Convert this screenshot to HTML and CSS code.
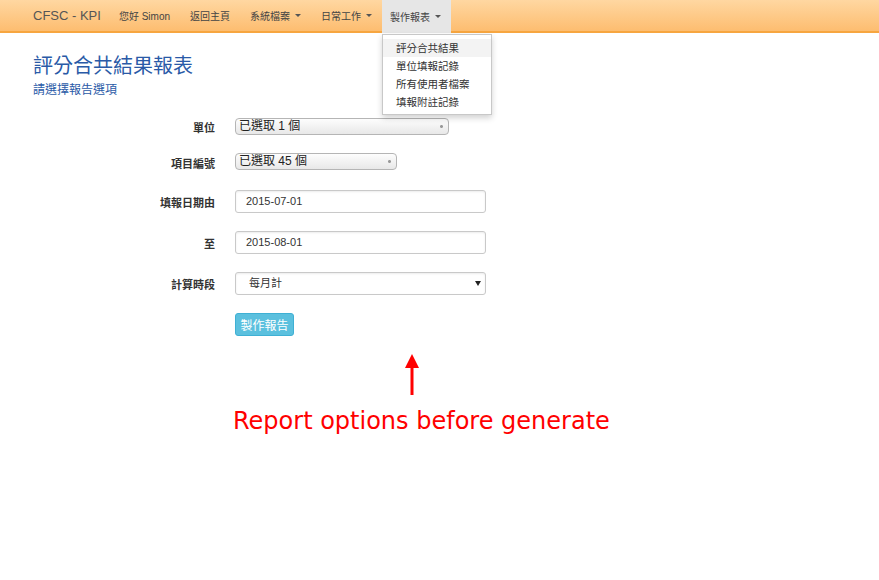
FILE: index.html
```html
<!DOCTYPE html>
<html lang="zh-Hant">
<head>
<meta charset="utf-8">
<title>CFSC - KPI</title>
<link rel="stylesheet" href="styles.css">
</head>
<body>
<nav class="navbar">
  <span class="brand">CFSC - KPI</span>
  <span class="nav-item">您好 Simon</span>
  <span class="nav-item">返回主頁</span>
  <span class="nav-item">系統檔案 <i class="caret"></i></span>
  <span class="nav-item">日常工作 <i class="caret"></i></span>
  <span class="nav-item active">製作報表 <i class="caret"></i>
    <ul class="dropdown">
      <li class="hover">評分合共結果</li>
      <li>單位填報記錄</li>
      <li>所有使用者檔案</li>
      <li>填報附註記錄</li>
    </ul>
  </span>
</nav>

<header class="page-head">
  <h1 class="title">評分合共結果報表</h1>
  <p class="subtitle">請選擇報告選項</p>
</header>

<form class="report-form">
  <label class="lbl">單位</label>
  <div class="ctl"><div class="mac-select w1">已選取 1 個<span class="updown"></span></div></div>

  <label class="lbl">項目編號</label>
  <div class="ctl"><div class="mac-select w2">已選取 45 個<span class="updown"></span></div></div>

  <label class="lbl">填報日期由</label>
  <div class="ctl"><div class="text-input">2015-07-01</div></div>

  <label class="lbl">至</label>
  <div class="ctl"><div class="text-input">2015-08-01</div></div>

  <label class="lbl">計算時段</label>
  <div class="ctl"><div class="text-input sel">每月計<span class="tri"></span></div></div>

  <span></span>
  <div class="ctl"><button type="button" class="btn-info">製作報告</button></div>
</form>

<section class="annotation">
  <svg class="arrow" width="14" height="42" viewBox="0 0 14 42">
    <polygon points="7,0 14,14 0,14" fill="#ff0000"/>
    <rect x="5.5" y="12" width="3" height="29" fill="#ff0000"/>
  </svg>
  <p class="note">Report options before generate</p>
</section>
</body>
</html>
```

FILE: styles.css
```css
html, body {
  margin: 0;
  padding: 0;
  background: #fff;
}
body {
  font-family: "Liberation Sans", "Noto Sans CJK TC", sans-serif;
  font-size: 12px;
  color: #333;
}

.navbar {
  display: flex;
  align-items: stretch;
  height: 31px;
  padding-left: 33px;
  background: linear-gradient(#ffd7a1, #fdbd70);
  border-bottom: 2px solid #f7a640;
  position: relative;
}
.brand {
  display: flex;
  align-items: center;
  font-size: 13px;
  color: #555;
  margin-right: 8px;
}
.nav-item {
  display: flex;
  align-items: center;
  padding: 0 10px;
  font-size: 10px;
  color: #444;
  position: relative;
}
.nav-item.active {
  background: #e6e6e6;
  margin-bottom: -2px;
  padding: 0 10px 0 8px;
}
.caret {
  display: inline-block;
  width: 0;
  height: 0;
  margin-left: 5px;
  border-top: 3px solid #555;
  border-left: 3px solid transparent;
  border-right: 3px solid transparent;
}
.dropdown {
  position: absolute;
  top: 34px;
  left: 0;
  width: 108px;
  margin: 0;
  padding: 4px 0 3px;
  list-style: none;
  background: #fff;
  border: 1px solid #c8c8c8;
  box-shadow: 0 3px 6px rgba(0,0,0,.18);
  z-index: 5;
}
.dropdown li {
  line-height: 18px;
  padding: 0 13px;
  font-size: 10.5px;
  color: #333;
  white-space: nowrap;
}
.dropdown li.hover {
  background: #f3f3f3;
}

.page-head {
  padding: 20px 0 0 33px;
}
.title {
  margin: 0;
  font-size: 20px;
  font-weight: normal;
  line-height: 26px;
  color: #2a5aa7;
}
.subtitle {
  margin: 3px 0 0;
  font-size: 12px;
  line-height: 16px;
  color: #2a5aa7;
}

.report-form {
  display: grid;
  grid-template-columns: 215px 260px;
  column-gap: 20px;
  row-gap: 18px;
  margin-top: 20px;
}
.lbl {
  display: flex;
  align-items: center;
  justify-content: flex-end;
  font-weight: bold;
  font-size: 11px;
  color: #333;
}
.ctl {
  display: flex;
  align-items: center;
}
.mac-select {
  position: relative;
  height: 15px;
  line-height: 15px;
  padding-left: 3px;
  border: 1px solid #b5b5b5;
  border-radius: 4px;
  background: linear-gradient(#fdfdfd, #e8e8e8);
  font-size: 12px;
  color: #222;
  box-sizing: content-box;
}
.mac-select.w1 { width: 209px; }
.mac-select.w2 { width: 157px; }
.updown {
  position: absolute;
  right: 5px;
  top: 5px;
  width: 3px;
  height: 5px;
  background: radial-gradient(circle, #999 40%, transparent 60%);
}
.report-form > .ctl:nth-child(4) { margin-bottom: 2px; }

.text-input {
  position: relative;
  box-sizing: border-box;
  width: 251px;
  height: 23px;
  line-height: 21px;
  padding-left: 10px;
  border: 1px solid #c9c9c9;
  border-radius: 3px;
  box-shadow: inset 0 1px 2px rgba(0,0,0,.08);
  font-size: 11px;
  color: #333;
  background: #fff;
}
.text-input.sel {
  padding-left: 13px;
}
.tri {
  position: absolute;
  right: 4px;
  top: 8px;
  width: 0;
  height: 0;
  border-top: 5px solid #222;
  border-left: 3px solid transparent;
  border-right: 3px solid transparent;
}

.btn-info {
  width: 59px;
  height: 23px;
  padding: 0;
  border: 1px solid #3fb0d4;
  border-radius: 3px;
  background: #5bc0de;
  color: #fff;
  font-family: inherit;
  font-size: 12px;
}

.annotation {
  padding-left: 233px;
  margin-top: 18px;
}
.arrow {
  display: block;
  margin-left: 172px;
}
.note {
  margin: 9px 0 0;
  font-family: "DejaVu Sans", sans-serif;
  font-size: 24px;
  line-height: 32px;
  color: #ff0000;
}
```
